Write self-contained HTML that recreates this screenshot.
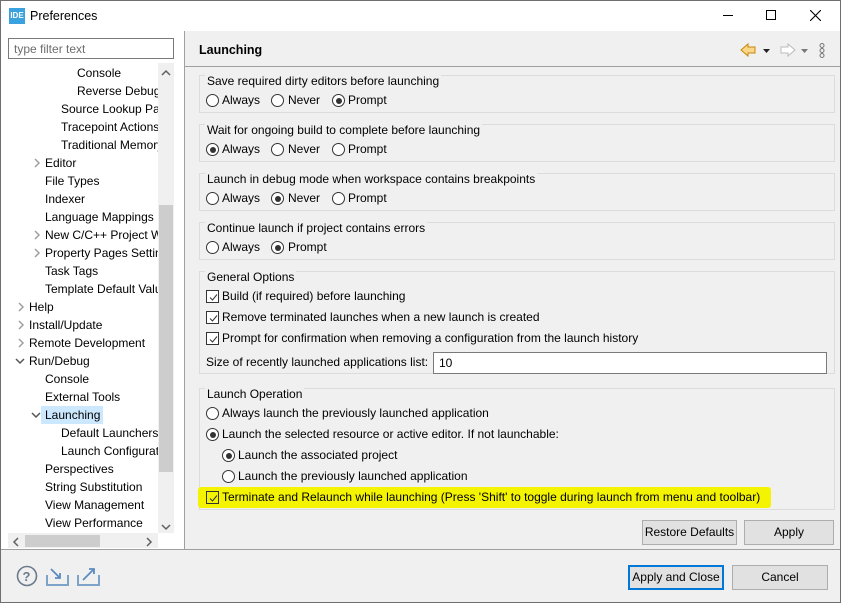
<!DOCTYPE html>
<html><head><meta charset="utf-8"><style>
*{box-sizing:border-box;margin:0;padding:0}
body{width:841px;height:603px;position:relative;overflow:hidden;background:#f0f0f0;font-family:"Liberation Sans",sans-serif;font-size:12px;color:#000;letter-spacing:0}
.a{position:absolute;white-space:nowrap}
.t{position:absolute;white-space:nowrap;line-height:16px}
.g{position:absolute;border:1px solid #dcdcdc;left:199px;width:636px}
.gl{position:absolute;background:#f0f0f0;padding:0 2px;left:205px;line-height:14px}
.r{position:absolute;width:13px;height:13px;border:1px solid #333;border-radius:50%;background:#fff}
.r.on::after{content:"";position:absolute;left:2.5px;top:2.5px;width:6px;height:6px;border-radius:50%;background:#333}
.c{position:absolute;width:13px;height:13px;border:1px solid #333;background:#fff}
.c svg{position:absolute;left:1px;top:1px}
.btn{position:absolute;border:1px solid #adadad;background:#e1e1e1;text-align:center;line-height:22px;height:25px}
.cr{position:absolute}
</style></head><body>
<div class="a" style="left:0;top:0;width:841px;height:31px;background:#fff"></div>
<div class="a" style="left:9px;top:8px;width:16px;height:16px;background:#3ba2e0;color:#fff;font-size:8px;font-weight:bold;text-align:center;line-height:16px;letter-spacing:0">IDE</div>
<div class="t" style="left:30px;top:8px;font-size:12.5px">Preferences</div>
<div class="a" style="left:723px;top:15px;width:10px;height:1px;background:#000"></div>
<div class="a" style="left:766px;top:10px;width:10px;height:10px;border:1px solid #000"></div>
<svg class="a" style="left:810px;top:10px" width="11" height="11"><path d="M0 0L11 11M11 0L0 11" stroke="#000" stroke-width="1.1"/></svg>
<div class="a" style="left:1px;top:31px;width:183px;height:518px;background:#fff"></div>
<div class="a" style="left:184px;top:31px;width:1px;height:518px;background:#a0a0a0"></div>
<div class="a" style="left:8px;top:38px;width:166px;height:21px;border:1px solid #7a7a7a;background:#fff"></div>
<div class="t" style="left:14px;top:41px;color:#6d6d6d">type filter text</div>
<div class="a" style="left:158px;top:63px;width:16px;height:470px;background:#f0f0f0"></div>
<div class="a" style="left:159px;top:205px;width:14px;height:267px;background:#cdcdcd"></div>
<svg class="a" style="left:161px;top:69px" width="10" height="8"><path d="M1 6L5 2L9 6" fill="none" stroke="#606060" stroke-width="1.5"/></svg>
<svg class="a" style="left:161px;top:523px" width="10" height="8"><path d="M1 2L5 6L9 2" fill="none" stroke="#606060" stroke-width="1.5"/></svg>
<div class="a" style="left:8px;top:533px;width:150px;height:15px;background:#f0f0f0"></div>
<div class="a" style="left:25px;top:535px;width:75px;height:12px;background:#cdcdcd"></div>
<svg class="a" style="left:12px;top:537px" width="8" height="10"><path d="M6 1L2 5L6 9" fill="none" stroke="#606060" stroke-width="1.5"/></svg>
<svg class="a" style="left:145px;top:537px" width="8" height="10"><path d="M2 1L6 5L2 9" fill="none" stroke="#606060" stroke-width="1.5"/></svg>
<div class="a" style="left:8px;top:63px;width:150px;height:470px;overflow:hidden">
<div class="a" style="left:33px;top:343px;width:62px;height:18px;background:#cce8ff"></div>
<div class="t" style="left:69px;top:2px">Console</div>
<div class="t" style="left:69px;top:20px">Reverse Debugging</div>
<div class="t" style="left:53px;top:38px">Source Lookup Path</div>
<div class="t" style="left:53px;top:56px">Tracepoint Actions</div>
<div class="t" style="left:53px;top:74px">Traditional Memory</div>
<svg class="cr" style="left:25px;top:95px" width="8" height="10"><path d="M2 1L6 5L2 9" fill="none" stroke="#a0a0a0" stroke-width="1.5"/></svg><div class="t" style="left:37px;top:92px">Editor</div>
<div class="t" style="left:37px;top:110px">File Types</div>
<div class="t" style="left:37px;top:128px">Indexer</div>
<div class="t" style="left:37px;top:146px">Language Mappings</div>
<svg class="cr" style="left:25px;top:167px" width="8" height="10"><path d="M2 1L6 5L2 9" fill="none" stroke="#a0a0a0" stroke-width="1.5"/></svg><div class="t" style="left:37px;top:164px">New C/C++ Project Wizard</div>
<svg class="cr" style="left:25px;top:185px" width="8" height="10"><path d="M2 1L6 5L2 9" fill="none" stroke="#a0a0a0" stroke-width="1.5"/></svg><div class="t" style="left:37px;top:182px">Property Pages Settings</div>
<div class="t" style="left:37px;top:200px">Task Tags</div>
<div class="t" style="left:37px;top:218px">Template Default Values</div>
<svg class="cr" style="left:9px;top:239px" width="8" height="10"><path d="M2 1L6 5L2 9" fill="none" stroke="#a0a0a0" stroke-width="1.5"/></svg><div class="t" style="left:21px;top:236px">Help</div>
<svg class="cr" style="left:9px;top:257px" width="8" height="10"><path d="M2 1L6 5L2 9" fill="none" stroke="#a0a0a0" stroke-width="1.5"/></svg><div class="t" style="left:21px;top:254px">Install/Update</div>
<svg class="cr" style="left:9px;top:275px" width="8" height="10"><path d="M2 1L6 5L2 9" fill="none" stroke="#a0a0a0" stroke-width="1.5"/></svg><div class="t" style="left:21px;top:272px">Remote Development</div>
<svg class="cr" style="left:7px;top:294px" width="10" height="8"><path d="M1 2L5 6L9 2" fill="none" stroke="#555" stroke-width="1.5"/></svg><div class="t" style="left:21px;top:290px">Run/Debug</div>
<div class="t" style="left:37px;top:308px">Console</div>
<div class="t" style="left:37px;top:326px">External Tools</div>
<svg class="cr" style="left:23px;top:348px" width="10" height="8"><path d="M1 2L5 6L9 2" fill="none" stroke="#555" stroke-width="1.5"/></svg><div class="t" style="left:37px;top:344px">Launching</div>
<div class="t" style="left:53px;top:362px">Default Launchers</div>
<div class="t" style="left:53px;top:380px">Launch Configurations</div>
<div class="t" style="left:37px;top:398px">Perspectives</div>
<div class="t" style="left:37px;top:416px">String Substitution</div>
<div class="t" style="left:37px;top:434px">View Management</div>
<div class="t" style="left:37px;top:452px">View Performance</div>
</div>
<div class="t" style="left:199px;top:42px;font-weight:bold;font-size:12.5px">Launching</div>
<div class="a" style="left:185px;top:66px;width:656px;height:1px;background:#a0a0a0"></div>
<svg class="a" style="left:740px;top:42px" width="90" height="16">
<path d="M1 8L8 2V5H15V11H8V14Z" fill="#fbd78a" stroke="#c8860a"/>
<path d="M23 7H30L26.5 11Z" fill="#222"/>
<path d="M55 8L48 2V5H41V11H48V14Z" fill="#fff" stroke="#bbb"/>
<path d="M61 7H68L64.5 11Z" fill="#777"/>
<circle cx="82" cy="3.5" r="2" fill="none" stroke="#777"/><circle cx="82" cy="8.5" r="2" fill="none" stroke="#777"/><circle cx="82" cy="13.5" r="2" fill="none" stroke="#777"/>
</svg>
<div class="g" style="top:75px;height:38px"></div><div class="gl t" style="top:74px">Save required dirty editors before launching</div>
<div class="r" style="left:206px;top:94px"></div><div class="t" style="left:222px;top:92px">Always</div>
<div class="r" style="left:271px;top:94px"></div><div class="t" style="left:288px;top:92px">Never</div>
<div class="r on" style="left:332px;top:94px"></div><div class="t" style="left:348px;top:92px">Prompt</div>
<div class="g" style="top:124px;height:38px"></div><div class="gl t" style="top:123px">Wait for ongoing build to complete before launching</div>
<div class="r on" style="left:206px;top:143px"></div><div class="t" style="left:222px;top:141px">Always</div>
<div class="r" style="left:271px;top:143px"></div><div class="t" style="left:288px;top:141px">Never</div>
<div class="r" style="left:332px;top:143px"></div><div class="t" style="left:348px;top:141px">Prompt</div>
<div class="g" style="top:173px;height:38px"></div><div class="gl t" style="top:172px">Launch in debug mode when workspace contains breakpoints</div>
<div class="r" style="left:206px;top:192px"></div><div class="t" style="left:222px;top:190px">Always</div>
<div class="r on" style="left:271px;top:192px"></div><div class="t" style="left:288px;top:190px">Never</div>
<div class="r" style="left:332px;top:192px"></div><div class="t" style="left:348px;top:190px">Prompt</div>
<div class="g" style="top:222px;height:38px"></div><div class="gl t" style="top:221px">Continue launch if project contains errors</div>
<div class="r" style="left:206px;top:241px"></div><div class="t" style="left:222px;top:239px">Always</div>
<div class="r on" style="left:271px;top:241px"></div><div class="t" style="left:288px;top:239px">Prompt</div>
<div class="g" style="top:271px;height:103px"></div><div class="gl t" style="top:270px">General Options</div>
<div class="c" style="left:206px;top:290px"><svg width="11" height="11"><path d="M2 5.5L4.5 8L9 2.5" fill="none" stroke="#333"/></svg></div><div class="t" style="left:222px;top:288px">Build (if required) before launching</div>
<div class="c" style="left:206px;top:311px"><svg width="11" height="11"><path d="M2 5.5L4.5 8L9 2.5" fill="none" stroke="#333"/></svg></div><div class="t" style="left:222px;top:309px">Remove terminated launches when a new launch is created</div>
<div class="c" style="left:206px;top:332px"><svg width="11" height="11"><path d="M2 5.5L4.5 8L9 2.5" fill="none" stroke="#333"/></svg></div><div class="t" style="left:222px;top:330px">Prompt for confirmation when removing a configuration from the launch history</div>
<div class="t" style="left:206px;top:354px">Size of recently launched applications list:</div>
<div class="a" style="left:433px;top:352px;width:394px;height:22px;border:1px solid #7a7a7a;background:#fff"></div>
<div class="t" style="left:439px;top:355px">10</div>
<div class="g" style="top:388px;height:122px"></div><div class="gl t" style="top:387px">Launch Operation</div>
<div class="r" style="left:206px;top:407px"></div><div class="t" style="left:222px;top:405px">Always launch the previously launched application</div>
<div class="r on" style="left:206px;top:428px"></div><div class="t" style="left:222px;top:426px">Launch the selected resource or active editor. If not launchable:</div>
<div class="r on" style="left:222px;top:449px"></div><div class="t" style="left:238px;top:447px">Launch the associated project</div>
<div class="r" style="left:222px;top:470px"></div><div class="t" style="left:238px;top:468px">Launch the previously launched application</div>
<div class="a" style="left:198px;top:487px;width:573px;height:21px;background:#f4f400;border-radius:3px"></div>
<div class="c" style="left:206px;top:491px;background:#f4f400"><svg width="11" height="11"><path d="M2 5.5L4.5 8L9 2.5" fill="none" stroke="#333"/></svg></div><div class="t" style="left:222px;top:489px">Terminate and Relaunch while launching (Press 'Shift' to toggle during launch from menu and toolbar)</div>
<div class="btn" style="left:642px;top:520px;width:95px">Restore Defaults</div>
<div class="btn" style="left:744px;top:520px;width:90px">Apply</div>
<div class="a" style="left:0;top:549px;width:841px;height:1px;background:#a0a0a0"></div>
<svg class="a" style="left:16px;top:565px" width="90" height="24">
<circle cx="11" cy="11" r="9.5" fill="none" stroke="#6b7a8c" stroke-width="1.6"/>
<text x="6.5" y="16" font-family="Liberation Sans" font-weight="bold" font-size="13" fill="#6b7a8c">?</text>
<path d="M31 10V20H52V10" fill="none" stroke="#7ea3c8" stroke-width="2"/><path d="M35 4L44 13M44 8V13H39" fill="none" stroke="#5b8cc0" stroke-width="1.8"/>
<path d="M62 10V20H83V10" fill="none" stroke="#7ea3c8" stroke-width="2"/><path d="M67 15L78 4M73 4H78V9" fill="none" stroke="#5b8cc0" stroke-width="1.8"/>
</svg>
<div class="btn" style="left:628px;top:565px;width:96px;border:2px solid #0078d7;line-height:21px">Apply and Close</div>
<div class="btn" style="left:732px;top:565px;width:96px">Cancel</div>
<div class="a" style="left:0;top:0;width:841px;height:603px;border:1px solid #6f6f6f"></div>
</body></html>
